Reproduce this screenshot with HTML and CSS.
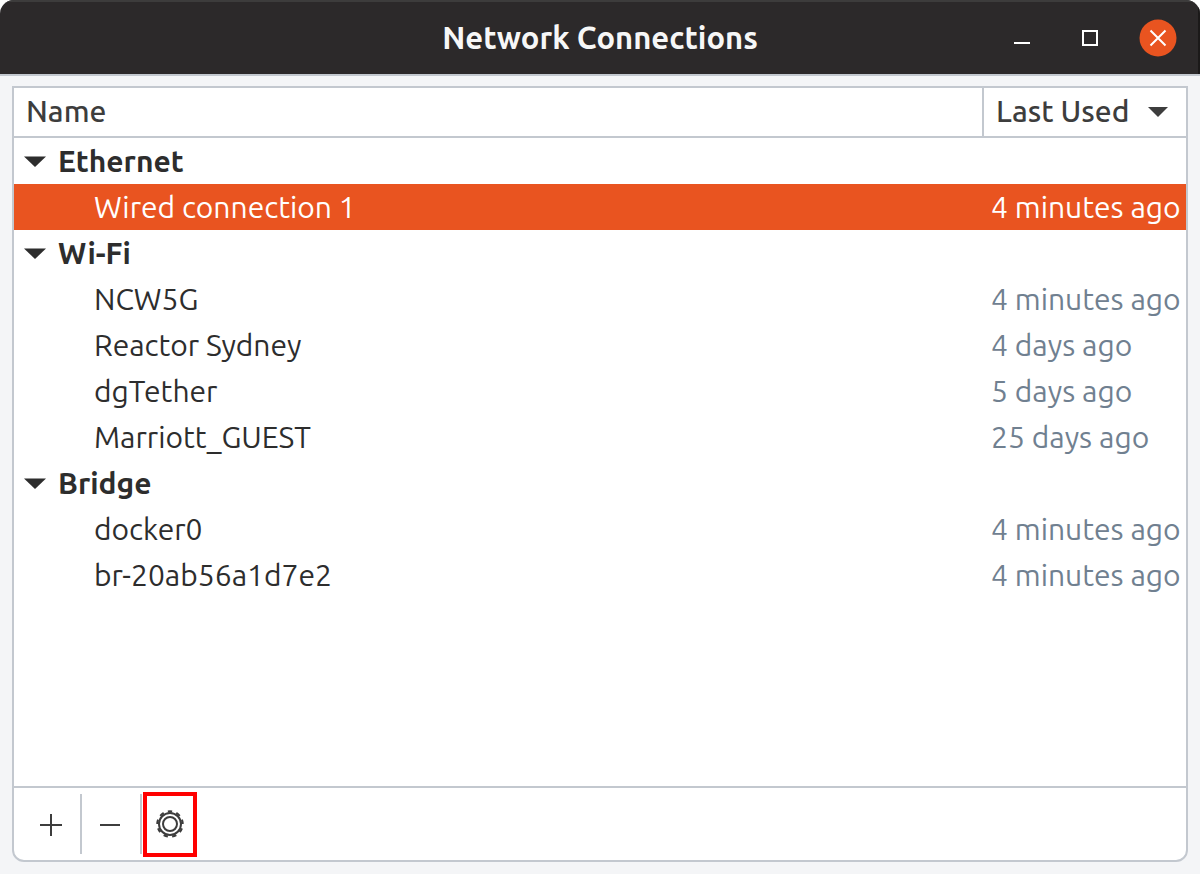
FILE: index.html
```html
<!DOCTYPE html>
<html lang="en">
<head>
<meta charset="utf-8">
<title>Network Connections</title>
<link rel="stylesheet" href="styles.css">
</head>
<body>
<div class="window">
  <header class="titlebar">
    <h1 class="title">Network Connections</h1>
    <div class="controls">
      <button class="control" type="button" aria-label="Minimize"><svg viewBox="0 0 38 38" class="control-icon"><path d="M11 24h16" /></svg></button>
      <button class="control" type="button" aria-label="Maximize"><svg viewBox="0 0 38 38" class="control-icon"><path d="M12 12h14v14H12z" /></svg></button>
      <button class="control" type="button" aria-label="Close"><svg viewBox="0 0 38 38" class="control-icon"><circle class="disc" cx="19" cy="19" r="18.5" /><path d="M11.5 11.5l15 15M26.5 11.5l-15 15" /></svg></button>
    </div>
  </header>
  <main class="content">
    <div class="panel">
      <table class="connections">
        <thead>
          <tr>
            <th class="name-col" scope="col"><button class="sort" type="button">Name</button></th>
            <th class="used-col" scope="col"><button class="sort" type="button">Last Used<svg class="arrow" viewBox="0 0 22 12"><path d="M1 2h20L11 12z" /></svg></button></th>
          </tr>
        </thead>
        <tbody>
          <tr><th class="group" colspan="2" scope="rowgroup"><button class="expander" type="button" aria-expanded="true"><svg class="arrow" viewBox="0 0 22 12"><path d="M0 1.5h22L11 12z" /></svg>Ethernet</button></th></tr>
          <tr class="selected"><td class="name">Wired connection 1</td><td class="used">4 minutes ago</td></tr>
        </tbody>
        <tbody>
          <tr><th class="group" colspan="2" scope="rowgroup"><button class="expander" type="button" aria-expanded="true"><svg class="arrow" viewBox="0 0 22 12"><path d="M0 1.5h22L11 12z" /></svg>Wi-Fi</button></th></tr>
          <tr><td class="name">NCW5G</td><td class="used">4 minutes ago</td></tr>
          <tr><td class="name">Reactor Sydney</td><td class="used">4 days ago</td></tr>
          <tr><td class="name">dgTether</td><td class="used">5 days ago</td></tr>
          <tr><td class="name">Marriott_GUEST</td><td class="used">25 days ago</td></tr>
        </tbody>
        <tbody>
          <tr><th class="group" colspan="2" scope="rowgroup"><button class="expander" type="button" aria-expanded="true"><svg class="arrow" viewBox="0 0 22 12"><path d="M0 1.5h22L11 12z" /></svg>Bridge</button></th></tr>
          <tr><td class="name">docker0</td><td class="used">4 minutes ago</td></tr>
          <tr><td class="name">br-20ab56a1d7e2</td><td class="used">4 minutes ago</td></tr>
        </tbody>
      </table>
      <div class="toolbar">
        <button class="tool" type="button" aria-label="Add connection"><svg class="tool-icon" viewBox="0 0 30 31"><path d="M4 16h22M15 5v22" /></svg></button>
        <span class="divider"></span>
        <button class="tool" type="button" aria-label="Remove connection"><svg class="tool-icon" viewBox="0 0 30 31"><path d="M4 16h20" /></svg></button>
        <span class="divider"></span>
        <button class="tool settings" type="button" aria-label="Edit connection"><svg class="tool-icon" viewBox="0 0 30 31">
          <circle cx="15" cy="15" r="11" />
          <circle cx="15" cy="15" r="7" />
          <circle class="teeth" cx="15" cy="15" r="12.7" pathLength="90" />
        </svg></button>
      </div>
    </div>
  </main>
</div>
</body>
</html>
```
FILE: styles.css
```css
* {
  box-sizing: border-box;
}

body {
  margin: 0;
  background: #fff;
  color: #2d2d2d;
  font-family: Ubuntu, "Noto Sans", sans-serif;
  font-size: 30px;
  line-height: 46px;
}

button {
  margin: 0;
  padding: 0;
  border: 0;
  background: none;
  color: inherit;
  font: inherit;
}

svg {
  display: block;
}

.window {
  display: flex;
  flex-direction: column;
  min-height: 100vh;
  border-radius: 14px 14px 0 0;
  overflow: hidden;
  background: #f4f5f7;
}

.titlebar {
  display: grid;
  grid-template-columns: 1fr auto 1fr;
  align-items: center;
  height: 76px;
  padding: 0 23px;
  border-top: 2px solid #3d3c3c;
  border-bottom: 2px solid #c3c8cf;
  background: #2c292a;
  box-shadow: inset -2px 0 #1b1919;
  color: #f7f7f7;
}

.title {
  grid-column: 2;
  margin: 0;
  font-size: 31px;
  font-weight: 700;
  line-height: 46px;
}

.controls {
  display: flex;
  justify-content: flex-end;
  gap: 30px;
}

.control-icon {
  width: 38px;
  height: 38px;
  fill: none;
  stroke: #fff;
  stroke-width: 2;
}

.disc {
  fill: #e95420;
  stroke: none;
}

.content {
  display: flex;
  flex: 1;
  padding: 10px 12px 12px;
}

.panel {
  display: flex;
  flex: 1;
  flex-direction: column;
  border: 2px solid #c3c8cf;
  border-radius: 0 0 12px 12px;
  background: #fff;
}

.connections {
  width: 100%;
  border-collapse: separate;
  border-spacing: 0;
  table-layout: fixed;
}

.connections th,
.connections td {
  padding: 0;
  text-align: left;
  white-space: nowrap;
}

.name-col,
.used-col {
  border-bottom: 2px solid #c3c8cf;
  color: #3d3d3d;
  font-weight: 500;
}

.connections .used-col {
  width: 204px;
  border-left: 2px solid #c3c8cf;
}

.sort {
  display: flex;
  align-items: center;
  justify-content: space-between;
  width: 100%;
  height: 48px;
  padding: 0 17px 2px 12px;
}

.arrow {
  width: 22px;
  height: 12px;
  fill: currentColor;
}

.group {
  font-weight: 700;
}

.expander {
  display: flex;
  align-items: center;
  gap: 12px;
  padding-left: 10px;
}

.connections .name {
  padding-left: 80px;
}

.connections .used {
  padding-left: 9px;
  color: #708090;
}

.selected {
  background: #e95420;
}

.connections .selected .name,
.connections .selected .used {
  color: #fff;
}

.toolbar {
  display: flex;
  height: 74px;
  margin-top: auto;
  padding: 4px 8px 3px;
  border-top: 2px solid #c3c8cf;
}

.tool {
  display: flex;
  align-items: center;
  justify-content: center;
  width: 58px;
}

.divider {
  width: 2px;
  margin: 2px 0 3px;
  background: #c3c8cf;
}

.settings {
  width: 54px;
  margin-left: 1px;
  border: 4px solid #f00;
}

.tool-icon {
  width: 30px;
  height: 31px;
  fill: none;
  stroke: #3d3d3d;
  stroke-width: 2;
}

.teeth {
  stroke-dasharray: 5 5;
  stroke-dashoffset: -5;
}
```
